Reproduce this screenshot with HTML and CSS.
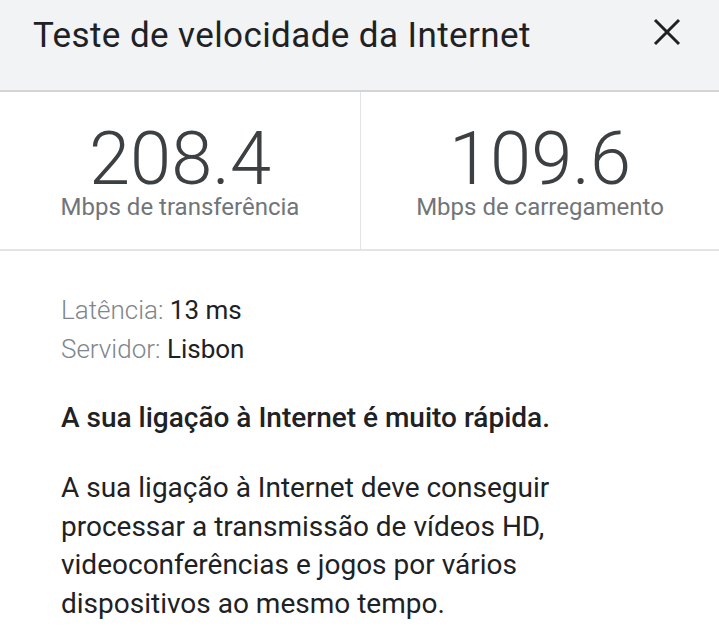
FILE: index.html
```html
<!doctype html>
<html>
    <head>
        <title>Teste de velocidade da Internet</title>
        <link rel="stylesheet" href="styles.css">
    </head>
    <body>
        <header class="top-bar">
            <span class="title">Teste de velocidade da Internet</span>
            <button class="close" aria-label="Fechar">
                <svg width="28" height="28" viewBox="0 0 28 28">
                    <path d="M2 2 L26 26 M26 2 L2 26" stroke="#202124" stroke-width="3" fill="none" />
                </svg>
            </button>
        </header>
        <main>
            <section class="results">
                <div class="result">
                    <span class="value">208.4</span>
                    <span class="unit">Mbps de transferência</span>
                </div>
                <div class="result">
                    <span class="value">109.6</span>
                    <span class="unit">Mbps de carregamento</span>
                </div>
            </section>
            <section class="details">
                <p class="info"><span class="label">Latência:</span> 13 ms</p>
                <p class="info"><span class="label">Servidor:</span> Lisbon</p>
                <p class="verdict">A sua ligação à Internet é muito rápida.</p>
                <p class="description">
                    A sua ligação à Internet deve conseguir processar a transmissão de vídeos HD,
                    videoconferências e jogos por vários dispositivos ao mesmo tempo.
                </p>
            </section>
        </main>
    </body>
</html>
```

FILE: styles.css
```css
html,
body {
    margin: 0;
    background: #ffffff;
    font-family: Roboto, "Noto Sans", sans-serif;
    color: #202124;
}

.top-bar {
    display: flex;
    align-items: center;
    justify-content: space-between;
    height: 70px;
    padding: 0 38px 20px 33px;
    background: #f1f3f4;
    border-bottom: 2px solid #d3d4d6;
}

.title {
    font-size: 35px;
    letter-spacing: 0.4px;
    color: #202124;
}

.close {
    display: flex;
    padding: 0;
    margin-top: -6px;
    border: none;
    background: none;
}

.results {
    display: grid;
    grid-template-columns: 360px 1fr;
    height: 157px;
    border-bottom: 2px solid #e3e4e6;
}

.result {
    display: flex;
    flex-direction: column;
    align-items: center;
    padding-top: 30px;
}

.result + .result {
    border-left: 1px solid #e3e4e6;
}

.value {
    font-size: 74px;
    font-weight: 300;
    line-height: 74px;
    color: #3c4043;
}

.unit {
    font-size: 24px;
    line-height: 22px;
    color: #70757a;
}

.details {
    padding: 40px 40px 0 61px;
}

.details p {
    margin: 0;
}

.info {
    font-size: 26px;
    line-height: 39px;
}

.label {
    font-weight: 300;
    color: #80868b;
}

.details .verdict {
    font-size: 28px;
    line-height: 38px;
    font-weight: 500;
    margin-top: 30px;
}

.details .description {
    max-width: 500px;
    font-size: 28px;
    line-height: 38.5px;
    margin-top: 32px;
    color: #202124;
}
```
